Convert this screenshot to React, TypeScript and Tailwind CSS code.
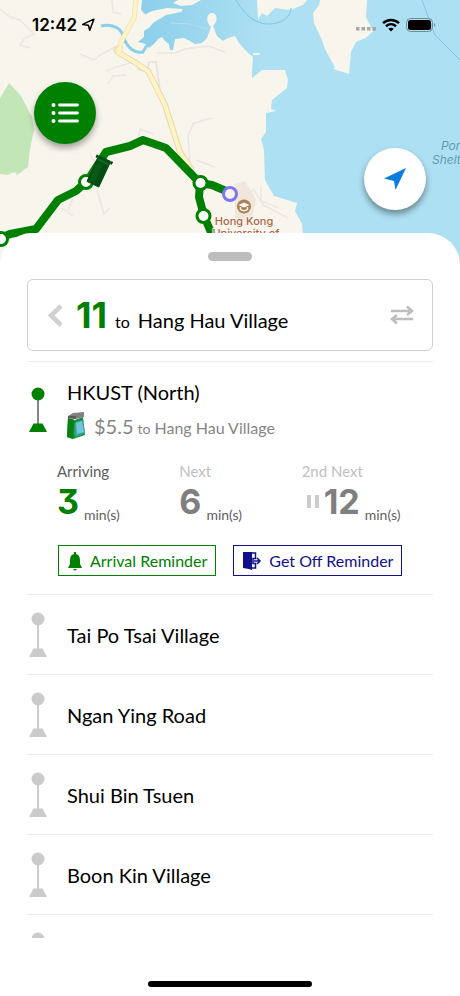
import React from "react";

const STATION_NAMES = ["Tai Po Tsai Village", "Ngan Ying Road", "Shui Bin Tsuen", "Boon Kin Village"];

function MapLayer() {
  return (
    <svg
      className="absolute inset-x-0 top-0 h-[270px] w-full"
      viewBox="0 0 460 270"
      preserveAspectRatio="xMidYMin slice"
      role="img"
      aria-label="Route map"
    >
      <defs>
        <linearGradient id="inlet" gradientUnits="userSpaceOnUse" x1="140" y1="0" x2="265" y2="0">
          <stop offset="0" stopColor="#8ccfea" />
          <stop offset="1" stopColor="#ade0f3" />
        </linearGradient>
      </defs>
      <rect width="460" height="270" fill="#f8f5ed" />
      <path
        d="M142 0L141 10L146 15L151 16L150 27L144 31L144 37L138 42L146 44L149 48L155 43L158 39L162 37L165 41L169 44L170 50L173 50L175 39L184 38L190 41L195 44L202 43L207 38L211 27C206 22 206 15 211 13C217 12 219 20 213 26L217 36L223 41L228 38L235 36L239 43L246 51L253 57L252 72L252 78L262 70L285 70L288 80L287 88L272 100L271 109L276 111L266 113L266 132L261 139L264 150L265 180L274 196L297 203L295 211L302 224L306 270H460V0Z"
        fill="url(#inlet)"
      />
      <path d="M146 14L152 11L167 8L183 9L181 12L166 15L153 23L149 28L144 24ZM173 3L178 0H201L192 5L181 6Z" fill="#f8f5ed" />
      <path d="M170 23L190 24L208 29" fill="none" stroke="#b7deea" strokeWidth="1" />
      <path d="M257 0L258 20L262 13L267 16L275 8L290 10L303 5L307 0ZM320 0L319 5L313 13L314 23L321 38L325 49L332 62L335 67L333 69L349 74L351 52L356 42L366 38L373 31L366 17L367 0ZM253 53L260 53L259 55L253 55Z" fill="#f8f5ed" />
      <path d="M101 26C110 24 119 27 122 33C125 44 132 54 143 52L147 45" fill="none" stroke="#8ccfea" strokeWidth="3" />
      <path d="M0 98L9 83L21 96L32 117L34 130L30 149L28 167L17 175L15 172L7 175L0 174Z" fill="#c2e6b5" />
      <path d="M236 0C247 19 260 27 277 23C287 20 291 14 291 8M422 0L435 35L460 60" fill="none" stroke="#82c3ec" strokeWidth="1" />
      <g fill="none" stroke="#ebe6e1" strokeWidth="1.500">
        <path d="M0 9L10 17L20 20L34 34L24 39L20 45L30 48M80 54L94 60L102 54L115 47M106 71C118 66 127 64 137 61M108 84L113 76L126 75M190 162L188 135L194 123L212 118M90 154L96 164M138 139L140 129L153 134M157 53L175 53L185 49L208 46L225 52M196 160L215 167M61 208L73 216M73 198L68 211M97 190L104 214L110 208M112 0L113 12L121 14" />
        <path d="M235 185L244 194L254 190L263 205L288 218M261 187L261 201L279 208" />
        <path d="M137 69L147 71L149 62L156 62L158 77L160 90" stroke="#e5dfda" />
      </g>
      <path d="M136 0L134 18L121 42L119 53L136 63L148 71L155 85L165 105L172 127L180 152L192 170" fill="none" stroke="#ead9ae" strokeWidth="5" />
      <path d="M119 53L136 63L148 71L155 85L165 105L172 127L180 152L192 170" fill="none" stroke="#ead9ae" strokeWidth="6" />
      <circle cx="118" cy="50" r="4" fill="#f8edb9" stroke="#ead9ae" />
      <path d="M136 0L134 18L121 42L119 53L136 63L148 71L155 85L165 105L172 127L180 152L192 170" fill="none" stroke="#fff4c6" strokeWidth="4" />
      <path d="M235 184L245 181L256 200L252 217L235 225Z" fill="#f1e6da" />
      <g fill="none" stroke="#008000" strokeWidth="8" strokeLinejoin="round">
        <path d="M-5 245L1 238L10 234L36 229L58 200L76 191L88 180L106 152L130 146L143 140L166 148L200 183L212 185L226 191" />
        <path d="M200 183L199 197L204 216L216 244" />
      </g>
      <g fill="#fff" stroke="#008000" strokeWidth="3">
        <circle cx="200.500" cy="183" r="6.500" />
        <circle cx="203.500" cy="216" r="6.500" />
        <circle cx="86" cy="182" r="6.500" />
        <circle cx="1" cy="239" r="6.500" />
      </g>
      <circle cx="230" cy="194" r="6.500" fill="#f8f5ed" stroke="#8076f5" strokeWidth="3" />
      <g transform="translate(99 171) rotate(25)">
        <rect x="-7" y="-14" width="14" height="29" rx="1" fill="#064c12" />
        <path d="M-8 -14V-11M8 -14V-11" stroke="#033608" strokeWidth="2" />
        <path d="M-6 -11H6V-9H-6Z" fill="#0c6a1d" />
        <path d="M-5 -7H1V13H-5Z" fill="#075917" />
      </g>
      <circle cx="244" cy="206.500" r="7" fill="#a98258" />
      <path d="M238.500 205L244 202.500L249.500 205L244 207.500Z" fill="#fff8ed" />
      <path d="M240.500 207V209.500C242.500 211 245.500 211 247.500 209.500V207" fill="none" stroke="#fff8ed" strokeWidth="1.400" />
      <g fontFamily="Inter, sans-serif" fontSize="11" fontWeight="500" fill="#aa6849" stroke="#fff8ef" strokeWidth="2" paintOrder="stroke" textAnchor="middle">
        <text x="244" y="225">Hong Kong</text>
        <text x="246" y="237">University of</text>
      </g>
      <g fontFamily="Inter, sans-serif" fontSize="12" fontStyle="italic" fill="#659bb2">
        <text x="441" y="150">Port</text>
        <text x="432" y="164">Shelter</text>
      </g>
    </svg>
  );
}

function StatusBar() {
  return (
    <div className="flex h-[50px] items-center pl-8 pr-6">
      <time className="font-[Inter,sans-serif] text-[17px] leading-5 font-semibold">12:42</time>
      <svg className="ml-1 h-[14px] w-[14px]" viewBox="0 0 12 12" aria-hidden="true">
        <path d="M1.500 5.500L11 1L7.500 10.500L6.300 6.200Z" fill="none" stroke="#000" strokeWidth="1.300" strokeLinejoin="round" />
      </svg>
      <div className="ml-auto flex items-center">
        <svg className="mt-2 mr-1.5 h-1 w-5" viewBox="0 0 20 4" aria-hidden="true">
          <path d="M0 0h3.500v3.500H0zM5.500 0H9v3.500H5.500zM11 0h3.500v3.500H11zM16.500 0H20v3.500h-3.500z" fill="#a7aaa9" />
        </svg>
        <svg className="mr-1.5 h-[14px] w-[18px]" viewBox="0 0 18 14" aria-hidden="true">
          <path d="M1 5.200C5.500 .8 12.500 .8 17 5.200M4 8.300C7 5.600 11 5.600 14 8.300" fill="none" stroke="#000" strokeWidth="2.500" />
          <path d="M6.300 10.700C8 9.500 10 9.500 11.700 10.700L9 13.400Z" />
        </svg>
        <svg className="h-[14px] w-[30px]" viewBox="0 0 30 14" aria-hidden="true">
          <rect x=".5" y=".5" width="26" height="13" rx="4" fill="none" stroke="#718a94" />
          <rect x="2" y="2" width="23" height="10" rx="2.500" />
          <path d="M28 5V9C29.500 8.500 29.500 5.500 28 5Z" fill="#718a94" />
        </svg>
      </div>
    </div>
  );
}

function StopMarker({ active = false }: { active?: boolean }) {
  return (
    <svg className="h-[45px] w-[18px] shrink-0" viewBox="0 0 18 45" aria-hidden="true">
      <path d="M9 12V37" stroke={active ? "#858585" : "#cbcbcb"} strokeWidth="2" />
      <path d="M4.500 36.500H13.500L18 45H0Z" fill={active ? "#008000" : "#cbcbcb"} />
      <circle cx="9" cy="7" r="6.500" fill={active ? "#008000" : "#cbcbcb"} />
    </svg>
  );
}

function FareMachine() {
  return (
    <svg className="h-7 w-5" viewBox="0 0 20 28" aria-hidden="true">
      <path d="M1 6L8 8L16 5L18 23L6 27L0 25Z" fill="#14913a" />
      <path d="M1 6L7 8L6 27L0 25Z" fill="#0a7f12" />
      <path d="M1 4L6 1L17 0L17 5L9 7L1 6Z" fill="#828086" />
      <path d="M1 4L9 4L9 7L1 6Z" fill="#5d595d" />
      <path d="M8 10L16 8L18 21L9 25L7 22Z" fill="#3aa58e" />
      <path d="M9 11L15 9L17 20L10 22Z" fill="#72c5dc" />
    </svg>
  );
}

interface ArrivalProps {
  label: string;
  minutes: string;
  tone: "live" | "later";
  paused?: boolean;
}

function Arrival({ label, minutes, tone, paused = false }: ArrivalProps) {
  const live = tone === "live";
  return (
    <div>
      <p className={live ? "text-[15px] leading-5 text-[#5c5c5c]" : "text-[15px] leading-5 text-[#bfbfbf]"}>{label}</p>
      <div className="flex h-[42px] items-end">
        {paused && (
          <svg className="mr-1 ml-1 h-[26px] w-[14px] self-center" viewBox="0 0 14 26" aria-hidden="true">
            <path d="M1 6H5V19H1ZM9 6H13V19H9Z" fill="#cbcbcb" />
          </svg>
        )}
        <strong
          className={
            live
              ? "font-[Inter,sans-serif] text-[34px] leading-[42px] font-bold text-[#008000] [font-feature-settings:'cv09']"
              : "font-[Inter,sans-serif] text-[34px] leading-[42px] font-bold text-[#7f7f7f]"
          }
        >
          {minutes}
        </strong>
        <span className="ml-[5px] text-sm leading-4 text-[#5f5f5f]">min(s)</span>
      </div>
    </div>
  );
}

export default function App() {
  return (
    <main className="relative flex min-h-screen flex-col overflow-hidden bg-white font-[Lato,sans-serif] text-black">
      <MapLayer />
      <header className="relative h-[233px]">
        <StatusBar />
        <div className="flex justify-between px-[34px] pt-8">
          <button type="button" aria-label="Route list" className="flex size-[62px] items-center justify-center rounded-full bg-[#008000] shadow-[0_4px_6px_rgba(0,0,0,0.35)]">
            <svg className="h-5 w-7" viewBox="0 0 28 20" aria-hidden="true">
              <path d="M8.500 2H26.500M8.500 10H26.500M8.500 18H26.500" stroke="#fff" strokeWidth="2.800" strokeLinecap="round" />
              <circle cx="2.500" cy="2" r="2" fill="#fff" />
              <circle cx="2.500" cy="10" r="2" fill="#fff" />
              <circle cx="2.500" cy="18" r="2" fill="#fff" />
            </svg>
          </button>
          <button type="button" aria-label="My location" className="mt-[66px] flex size-[62px] items-center justify-center rounded-full bg-white shadow-[0_4px_6px_rgba(0,0,0,0.4)]">
            <svg className="h-[22px] w-[22px]" viewBox="0 0 22 22" aria-hidden="true">
              <path d="M0 10.500L22 0L11.500 22L10 13Z" fill="#087ddd" />
            </svg>
          </button>
        </div>
      </header>

      <section className="relative flex flex-1 flex-col rounded-t-[32px] bg-white">
        <div className="mx-auto mt-[19px] h-[9px] w-[44px] rounded-full bg-[#bdbdbd]" />
        <div className="mx-[27px] mt-[18px] flex h-[72px] items-center rounded-md border border-[#cfcfcf]">
          <button type="button" aria-label="Back" className="ml-5 flex h-8 w-4 items-center">
            <svg className="h-[23px] w-[15px]" viewBox="0 0 15 23" aria-hidden="true">
              <path d="M13 2L3 11.500L13 21" fill="none" stroke="#d0d0d0" strokeWidth="4.500" />
            </svg>
          </button>
          <h1 className="ml-3 flex items-baseline">
            <strong className="font-[Inter,sans-serif] text-[36px] leading-10 font-bold text-[#008000]">11</strong>
            <span className="ml-2 text-base">to</span>
            <span className="ml-2 text-xl">Hang Hau Village</span>
          </h1>
          <button type="button" aria-label="Switch direction" className="mr-[18px] ml-auto">
            <svg className="h-5 w-6" viewBox="0 0 24 20" aria-hidden="true">
              <path d="M1 6H22M17 1.500L22 6L17 10M23 14H2M7 10L2 14L7 18.500" fill="none" stroke="#bdbdbd" strokeWidth="2.500" />
            </svg>
          </button>
        </div>

        <div className="mx-[27px] mt-[10px] h-[577px] overflow-hidden">
          <article className="h-[233px] border-t border-[#ececec] pt-4">
            <div className="flex h-16">
              <div className="ml-0.5 pt-[9px]">
                <StopMarker active />
              </div>
              <div className="ml-5">
                <h2 className="text-xl leading-7">HKUST (North)</h2>
                <div className="mt-1.5 flex items-center text-[#858585]">
                  <FareMachine />
                  <p className="ml-[7px] flex items-baseline leading-8">
                    <span className="text-xl">$5.5</span>
                    <span className="ml-1 text-sm">to</span>
                    <span className="ml-1 text-base">Hang Hau Village</span>
                  </p>
                </div>
              </div>
            </div>
            <div className="mr-[9px] ml-[30px] grid grid-cols-3 pt-[19px]">
              <Arrival label="Arriving" minutes="3" tone="live" />
              <Arrival label="Next" minutes="6" tone="later" />
              <Arrival label="2nd Next" minutes="12" tone="later" paused />
            </div>
            <div className="mt-[22px] ml-[31px] flex gap-[17px]">
              <button type="button" className="flex h-[31px] items-center border border-[#008000] px-2 text-base text-[#008000]">
                <svg className="mr-[7px] h-5 w-4" viewBox="0 0 16 20" fill="currentColor" aria-hidden="true">
                  <path d="M7 1H9V3C12.500 4 13 7 13 10V13L15 17H1L3 13V10C3 7 3.500 4 7 3ZM6 18H10Q8 21 6 18Z" />
                </svg>
                Arrival Reminder
              </button>
              <button type="button" className="flex h-[31px] items-center border border-[#100f8c] px-2 text-base text-[#100f8c]">
                <svg className="mr-[7px] h-5 w-5" viewBox="0 0 20 20" aria-hidden="true">
                  <path d="M1 1H10V19L7 18L1 17Z" fill="currentColor" />
                  <path d="M9 2H13.500V7.500H11V12.500H13.500V17H9M12 10H18M15 7L18 10L15 13" fill="none" stroke="currentColor" strokeWidth="1.500" />
                </svg>
                Get Off Reminder
              </button>
            </div>
          </article>
          <ul>
            {STATION_NAMES.map((name) => (
              <li key={name} className="flex h-20 items-center border-t border-[#ececec] pl-0.5">
                <StopMarker />
                <span className="ml-5 text-xl">{name}</span>
              </li>
            ))}
            <li className="flex h-20 items-center border-t border-[#ececec] pl-0.5">
              <StopMarker />
            </li>
          </ul>
        </div>
        <div className="mx-auto mt-auto mb-[9px] h-[6px] w-[164px] rounded-full bg-black" />
      </section>
    </main>
  );
}
